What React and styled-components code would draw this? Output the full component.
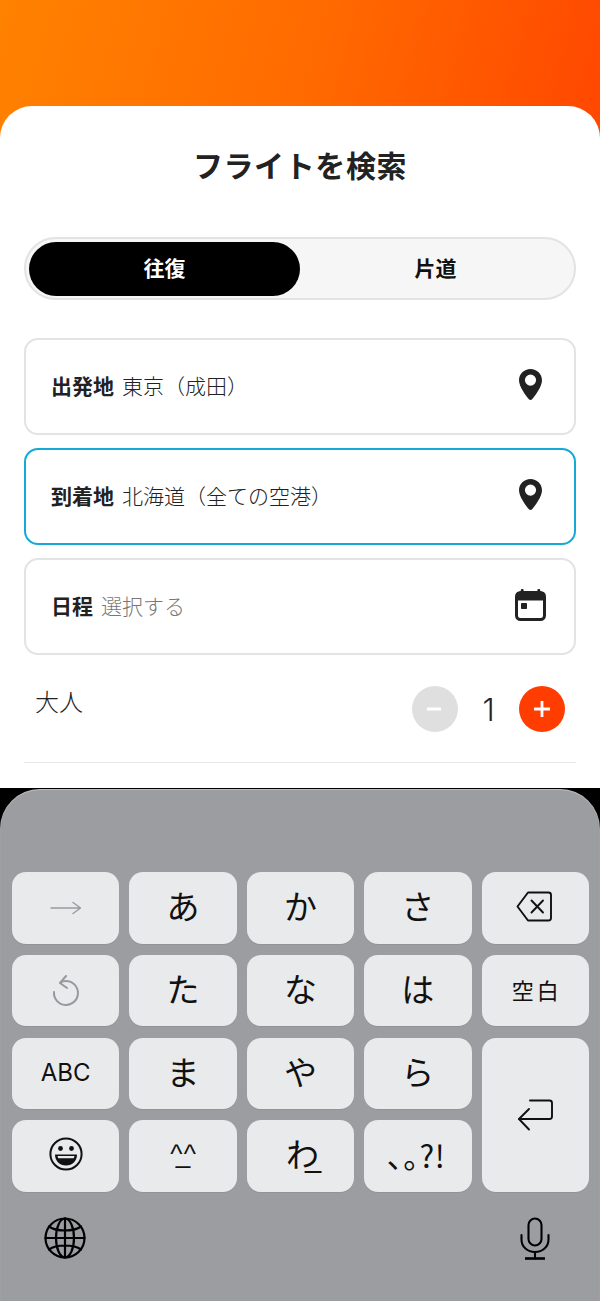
import React from 'react';
import styled, { createGlobalStyle } from 'styled-components';

const GlobalStyle = createGlobalStyle`
  html, body {
    margin: 0;
    padding: 0;
    background: #000;
  }
  body {
    font-family: "Noto Sans CJK JP", "Noto Sans", sans-serif;
    color: #222;
  }
  * { box-sizing: border-box; }
`;

const Screen = styled.div`
  width: 600px;
  height: 1301px;
  overflow: hidden;
  display: flex;
  flex-direction: column;
  background: #000;
`;

const Hero = styled.div`
  background: linear-gradient(105deg, #ff8200 0%, #ff6a00 50%, #ff4500 100%);
  height: 210px;
  margin-bottom: -104px;
  flex: none;
`;

const Sheet = styled.main`
  position: relative;
  flex: none;
  height: 682px;
  background: #fff;
  border-radius: 32px 32px 0 0;
  padding: 0 24px;
`;

const Title = styled.h1`
  margin: 0;
  padding-top: 36px;
  height: 131px;
  font-size: 30px;
  line-height: 44px;
  font-weight: 700;
  letter-spacing: 0.6px;
  text-align: center;
  color: #222;
`;

const Toggle = styled.div`
  display: grid;
  grid-template-columns: 1fr 1fr;
  height: 63px;
  padding: 2.500px 3px;
  border: 2px solid #e3e3e3;
  border-radius: 32px;
  background: #f6f6f6;
  margin-bottom: 38px;
`;

const Segment = styled.div`
  display: flex;
  align-items: center;
  justify-content: center;
  padding-bottom: 4px;
  border-radius: 28px;
  font-size: 21px;
  font-weight: 700;
  background: ${p => (p.$active ? '#000' : 'transparent')};
  color: ${p => (p.$active ? '#fff' : '#111')};
`;

const Fields = styled.div`
  display: flex;
  flex-direction: column;
  gap: 13px;
`;

const Field = styled.div`
  display: flex;
  align-items: center;
  justify-content: space-between;
  height: 97px;
  padding: 0 ${p => p.$trailing || 32}px 4px 25px;
  background: #fff;
  border: 2px solid ${p => (p.$focused ? '#14a9d6' : '#e3e3e3')};
  border-radius: 14px;
`;

const FieldText = styled.div`
  display: flex;
  align-items: center;
  gap: 8px;
  font-size: 21px;
  line-height: 30px;
`;

const FieldLabel = styled.span`
  font-weight: 700;
  color: #222;
`;

const FieldValue = styled.span`
  font-weight: 300;
  color: ${p => (p.$placeholder ? '#777' : '#222')};
`;

const PassengerRow = styled.div`
  display: flex;
  justify-content: space-between;
  height: 108px;
  padding: 31px 11px 0 11px;
  border-bottom: 1px solid #e8e8e8;
`;

const PassengerLabel = styled.span`
  font-size: 24px;
  font-weight: 300;
  line-height: 30px;
  color: #222;
`;

const Stepper = styled.div`
  display: flex;
  align-items: center;
  height: 46px;
`;

const StepButton = styled.div`
  width: 46px;
  height: 46px;
  border-radius: 50%;
  display: flex;
  align-items: center;
  justify-content: center;
  background: ${p => (p.$disabled ? '#dfdfdf' : '#ff3d00')};
`;

const Count = styled.span`
  width: 61px;
  text-align: center;
  font-family: "Inter", "Liberation Sans", sans-serif;
  font-size: 31px;
  font-weight: 300;
  color: #222;
`;

const Keyboard = styled.section`
  flex: 1;
  margin-top: 1px;
  padding-top: 83px;
  background: #9c9da1;
  border-radius: 40px 40px 0 0;
  box-shadow: inset 0 1px 1px rgba(255, 255, 255, 0.35);
`;

const KeyGrid = styled.div`
  display: grid;
  grid-template-columns: repeat(5, 107.4px);
  grid-template-rows: repeat(4, 71.5px);
  column-gap: 10px;
  row-gap: 11.3px;
  padding-left: 12px;
`;

const Key = styled.div`
  display: flex;
  align-items: center;
  justify-content: center;
  padding-bottom: 4px;
  grid-row: ${p => p.$rowSpan ? `span ${p.$rowSpan}` : 'auto'};
  background: #e9eaec;
  border-radius: 14px;
  box-shadow: 0 1px 0 rgba(0, 0, 0, 0.06);
  color: #111;
  font-size: 33px;
  font-weight: 400;
  line-height: 1;
`;

const Latin = styled.span`
  font-family: "Inter", "Liberation Sans", sans-serif;
  font-size: 24px;
  font-weight: 400;
  padding-top: 4px;
`;

const SpaceLabel = styled.span`
  font-size: 22px;
  letter-spacing: 3px;
  margin-right: -3px;
`;

const FaceLabel = styled.span`
  font-family: "Liberation Sans", sans-serif;
  font-size: 26px;
  letter-spacing: -6.500px;
  padding-right: 6.500px;
`;

const Underscored = styled.span`
  display: inline-flex;
  align-items: baseline;
  padding-left: 6px;
`;

const Low = styled.span`
  font-family: "Liberation Sans", sans-serif;
  font-size: 29px;
  margin-left: -14px;
`;

const PunctLabel = styled.span`
  font-size: 31px;
  letter-spacing: 0.5px;
  margin-right: 3px;
`;

const BottomBar = styled.div`
  display: flex;
  justify-content: space-between;
  align-items: center;
  padding: 25px 50px 0 44px;
`;

const Icon = ({ size = 24, height, children, ...rest }) => (
  <svg
    width={size}
    height={height || size}
    viewBox={`0 0 ${size} ${height || size}`}
    fill="none"
    stroke="currentColor"
    strokeLinecap="round"
    strokeLinejoin="round"
    {...rest}
  >
    {children}
  </svg>
);

const Pin = () => (
  <svg width="23" height="31" viewBox="0 0 23 31">
    <path
      fill="#222"
      fillRule="evenodd"
      d="M11.500 0C5.100 0 0 5 0 11.200c0 6.600 7 15.400 9.900 19 .8 1 2.400 1 3.200 0 2.900-3.600 9.900-12.400 9.900-19C23 5 17.900 0 11.500 0zM11.500 5.500a5.600 5.600 0 1 1 0 11.200a5.600 5.600 0 0 1 0-11.200z"
    />
  </svg>
);

const CalendarIcon = () => (
  <svg width="32" height="32" viewBox="0 0 32 32">
    <rect x="5.800" y="0" width="2.800" height="5" rx="1" fill="#222" />
    <rect x="22.400" y="0" width="2.800" height="5" rx="1" fill="#222" />
    <rect x="1.500" y="3.500" width="28" height="27" rx="4" fill="none" stroke="#222" strokeWidth="3" />
    <path fill="#222" d="M2 3h27v8.500H2z" />
    <rect x="6" y="14" width="6" height="6" rx="0.800" fill="#222" />
  </svg>
);

const MinusIcon = () => (
  <svg width="16" height="4" viewBox="0 0 16 4">
    <rect y="0.500" width="14" height="3" fill="#fff" />
  </svg>
);

const PlusIcon = () => (
  <svg width="18" height="18" viewBox="0 0 18 18">
    <path fill="#fff" d="M7.600 1h2.800v6.600H17v2.800h-6.600V17H7.600v-6.600H1V7.600h6.600z" />
  </svg>
);

const ArrowIcon = () => (
  <Icon size={32} height={14} style={{ color: '#9a9a9e', marginTop: 4 }} strokeWidth="1.400">
    <path d="M1 7h29M23 1.500 30.500 7 23 12.500" />
  </Icon>
);

const UndoIcon = () => (
  <Icon size={28} height={32} style={{ color: '#9a9a9e', marginTop: 4 }} strokeWidth="2">
    <path d="M8.500 7.500Q11 6 14 6A12 12 0 1 1 2 17" />
    <path d="M14 1 8 8l7 5" />
  </Icon>
);

const EmojiIcon = () => (
  <svg width="34" height="34" viewBox="0 0 34 34">
    <circle cx="17" cy="17" r="15.600" fill="none" stroke="#111" strokeWidth="2" />
    <circle cx="11.500" cy="11.500" r="2.400" fill="#111" />
    <circle cx="22.500" cy="11.500" r="2.400" fill="#111" />
    <path fill="#111" d="M6 17.500h22c0 6.500-4.600 11-11 11s-11-4.500-11-11z" />
    <path fill="#e9eaec" d="M8.500 19h17c-.2 1-.5 1.600-.9 2.300H9.400c-.4-.7-.7-1.300-.9-2.300z" />
  </svg>
);

const BackspaceIcon = () => (
  <Icon size={36} height={31} style={{ color: '#111', marginRight: 3, marginTop: 1 }} strokeWidth="1.900">
    <path d="M12 1.500h20.500c1.400 0 2.500 1.100 2.500 2.500v23c0 1.400-1.100 2.500-2.500 2.500H12L1.500 15.500z" />
    <path d="M15.500 9.500 27 21.500M27 9.500 15.500 21.500" />
  </Icon>
);

const ReturnIcon = () => (
  <Icon size={36} height={32} style={{ color: '#111', marginTop: 4 }} strokeWidth="1.900">
    <path d="M13 1.500h19.500c1.400 0 2.500 1.100 2.500 2.500v13.500c0 1.400-1.100 2.500-2.500 2.500H2" />
    <path d="M12 10 2 20l10 10.500" />
  </Icon>
);

const GlobeIcon = () => (
  <Icon size={42} style={{ color: '#000' }} strokeWidth="2.200">
    <circle cx="21" cy="21" r="19.500" />
    <ellipse cx="21" cy="21" rx="9" ry="19.500" />
    <path d="M21 1.500v39M1.500 21h39M5 9.500c4 3 9.500 4 16 4s12-1 16-4M5 32.500c4-3 9.500-4 16-4s12 1 16 4" />
  </Icon>
);

const MicIcon = () => (
  <Icon size={30} height={43} style={{ color: '#000' }} strokeWidth="2.100">
    <rect x="8.500" y="1.500" width="13" height="27" rx="6.500" />
    <path d="M1.500 18v4.500C1.500 30 7.500 35 15 35s13.500-5 13.500-12.500V18M15 35v6.500" />
    <path d="M5 41.500h20" strokeLinecap="butt" strokeWidth="2.600" />
  </Icon>
);

const App = () => (
  <>
    <GlobalStyle />
    <Screen>
      <Hero />
      <Sheet>
        <Title>フライトを検索</Title>
        <Toggle>
          <Segment $active>往復</Segment>
          <Segment>片道</Segment>
        </Toggle>
        <Fields>
          <Field>
            <FieldText>
              <FieldLabel>出発地</FieldLabel>
              <FieldValue>東京（成田）</FieldValue>
            </FieldText>
            <Pin />
          </Field>
          <Field $focused>
            <FieldText>
              <FieldLabel>到着地</FieldLabel>
              <FieldValue>北海道（全ての空港）</FieldValue>
            </FieldText>
            <Pin />
          </Field>
          <Field $trailing={27}>
            <FieldText>
              <FieldLabel>日程</FieldLabel>
              <FieldValue $placeholder>選択する</FieldValue>
            </FieldText>
            <CalendarIcon />
          </Field>
        </Fields>
        <PassengerRow>
          <PassengerLabel>大人</PassengerLabel>
          <Stepper>
            <StepButton $disabled><MinusIcon /></StepButton>
            <Count>1</Count>
            <StepButton><PlusIcon /></StepButton>
          </Stepper>
        </PassengerRow>
      </Sheet>
      <Keyboard>
        <KeyGrid>
          <Key><ArrowIcon /></Key>
          <Key>あ</Key>
          <Key>か</Key>
          <Key>さ</Key>
          <Key><BackspaceIcon /></Key>
          <Key><UndoIcon /></Key>
          <Key>た</Key>
          <Key>な</Key>
          <Key>は</Key>
          <Key><SpaceLabel>空白</SpaceLabel></Key>
          <Key><Latin>ABC</Latin></Key>
          <Key>ま</Key>
          <Key>や</Key>
          <Key>ら</Key>
          <Key $rowSpan={2}><ReturnIcon /></Key>
          <Key><EmojiIcon /></Key>
          <Key><FaceLabel>^_^</FaceLabel></Key>
          <Key><Underscored>わ<Low>_</Low></Underscored></Key>
          <Key><PunctLabel>､｡?!</PunctLabel></Key>
        </KeyGrid>
        <BottomBar>
          <GlobeIcon />
          <MicIcon />
        </BottomBar>
      </Keyboard>
    </Screen>
  </>
);

export default App;
